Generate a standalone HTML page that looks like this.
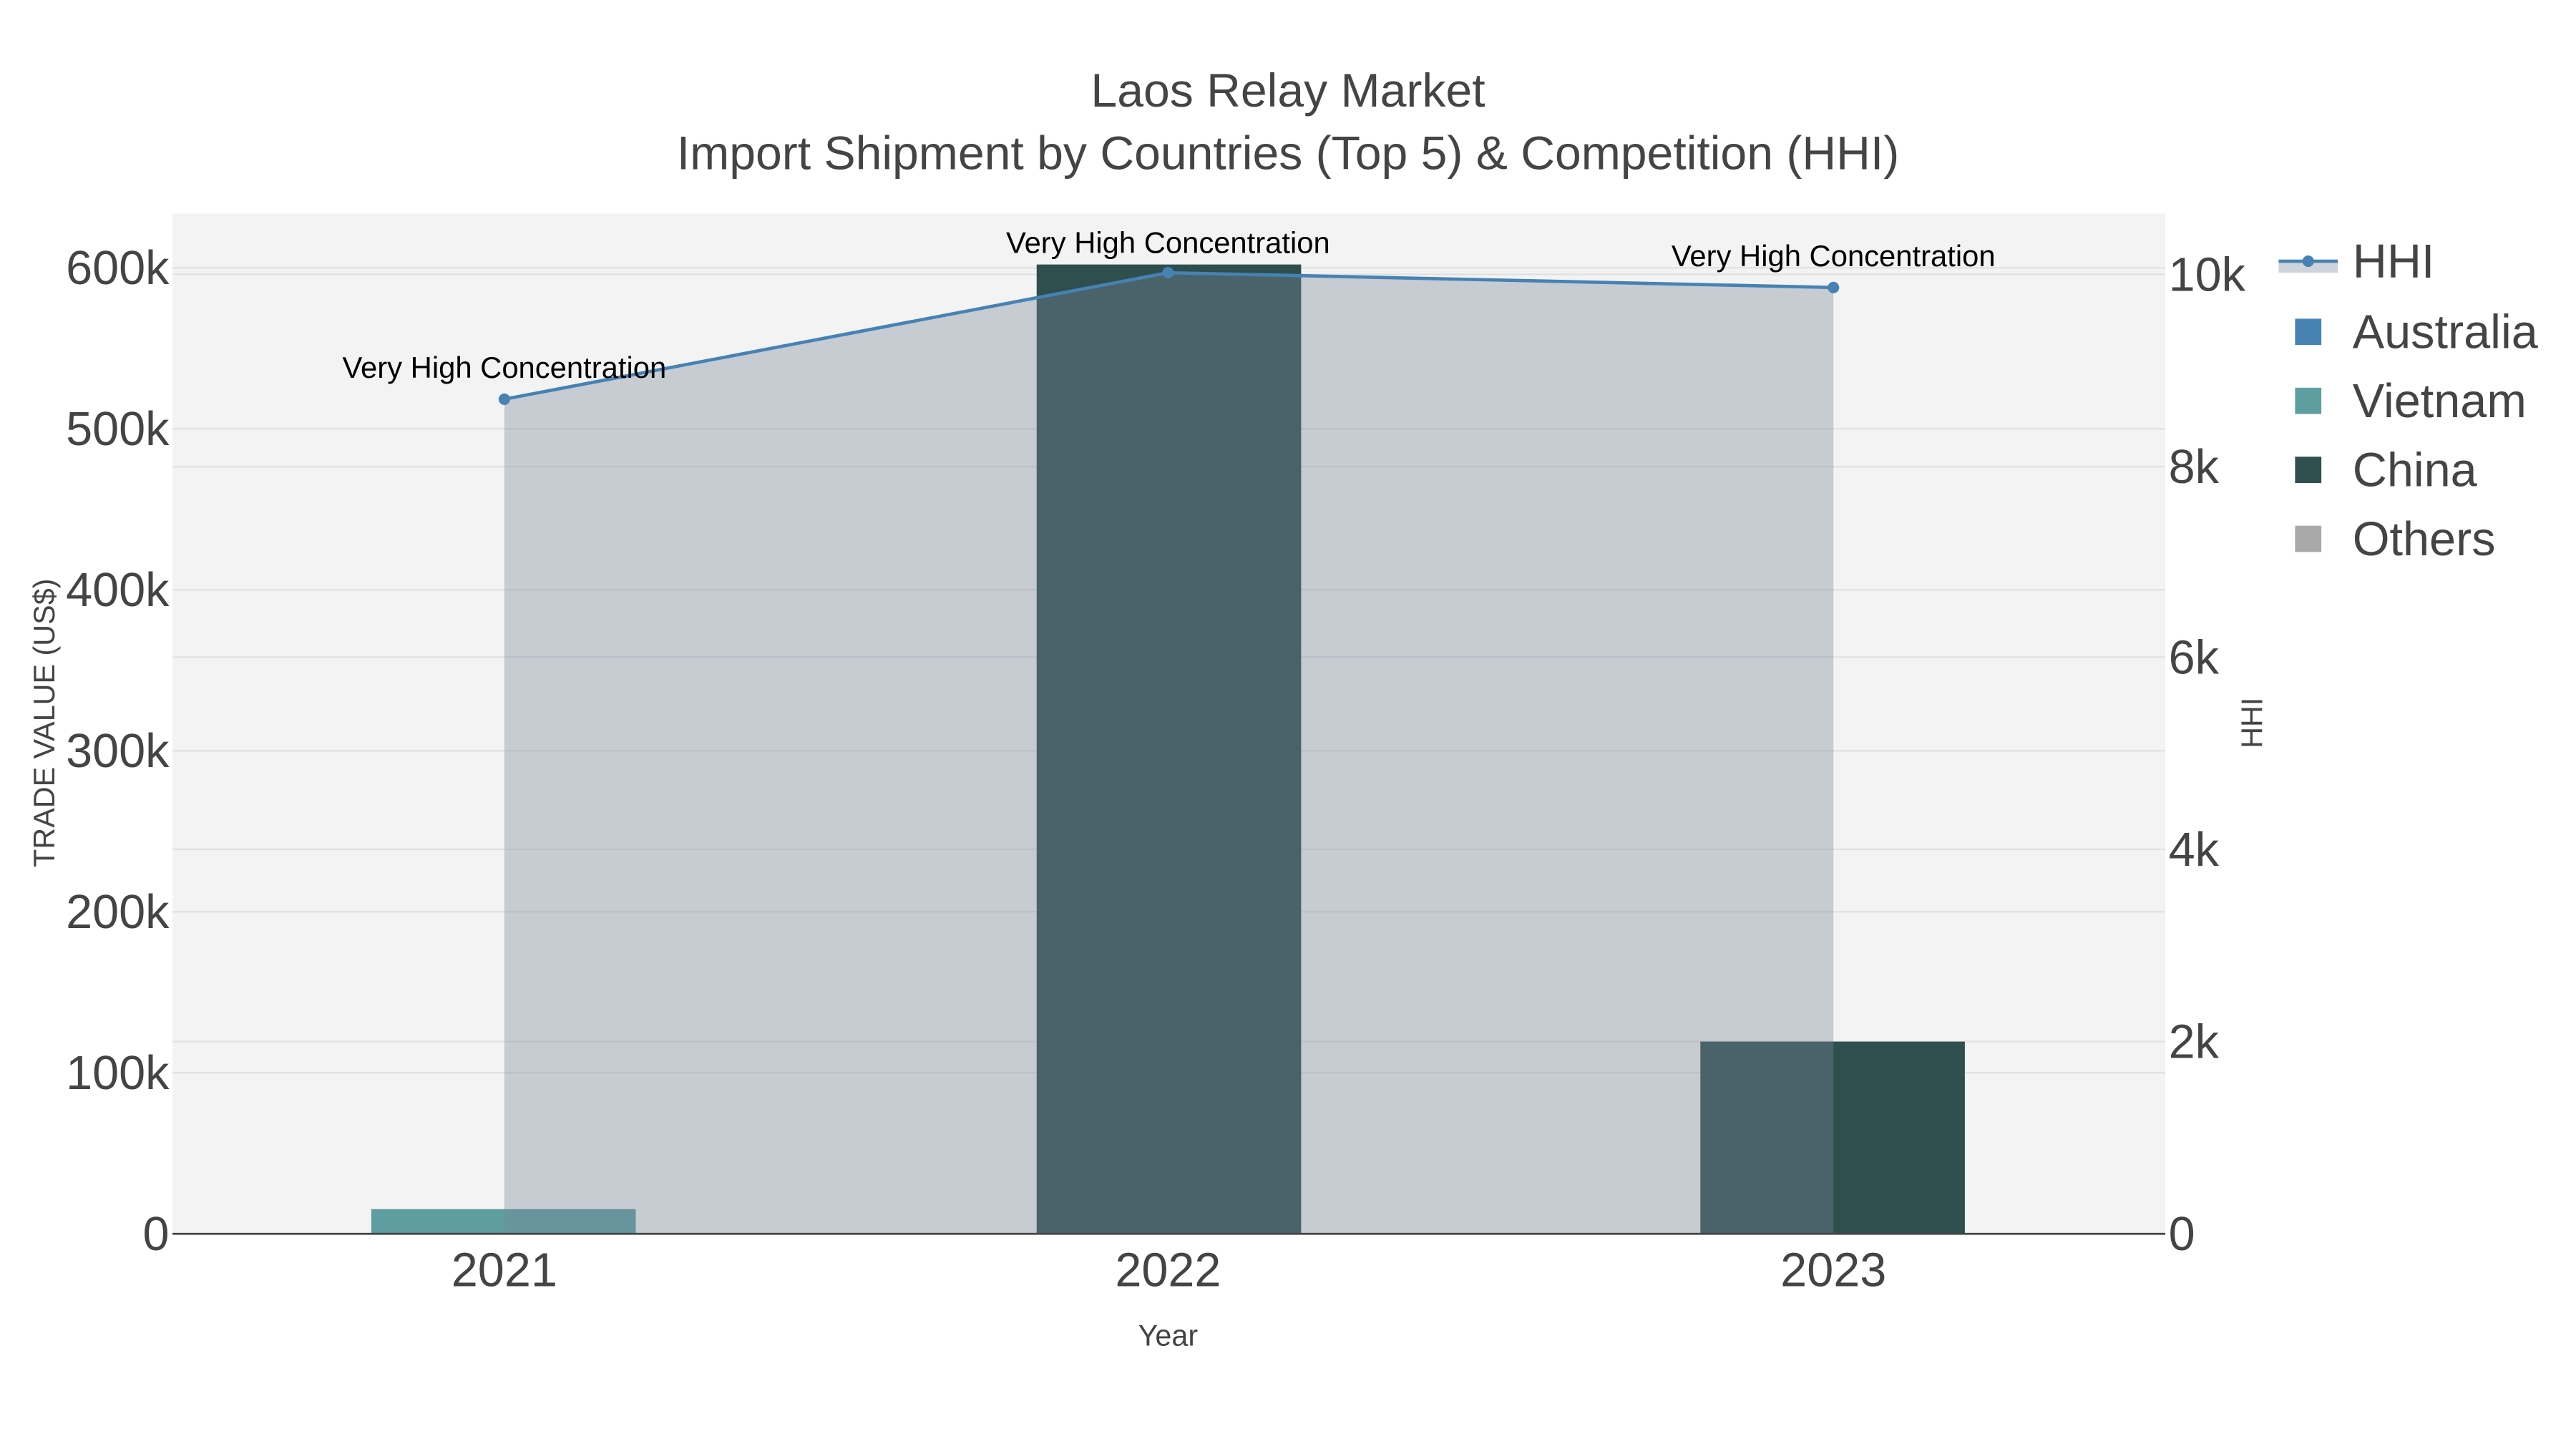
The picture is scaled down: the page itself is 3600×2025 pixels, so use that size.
<!DOCTYPE html>
<html><head><meta charset="utf-8"><style>html,body{margin:0;padding:0;background:#fff}svg{display:block}</style></head>
<body>
<svg width="3600" height="2025" viewBox="0 0 1568 882" xmlns="http://www.w3.org/2000/svg" font-family="Liberation Sans, sans-serif">
<rect width="1568" height="882" fill="#fff"/>
<rect x="105" y="130" width="1213" height="621" fill="#f3f3f3"/>
<g stroke="#e2e2e2" stroke-width="1">
<line x1="105" x2="1318" y1="163" y2="163"/><line x1="105" x2="1318" y1="261" y2="261"/><line x1="105" x2="1318" y1="359" y2="359"/><line x1="105" x2="1318" y1="457" y2="457"/><line x1="105" x2="1318" y1="555" y2="555"/><line x1="105" x2="1318" y1="653" y2="653"/>
<line x1="105" x2="1318" y1="167" y2="167"/><line x1="105" x2="1318" y1="284" y2="284"/><line x1="105" x2="1318" y1="400" y2="400"/><line x1="105" x2="1318" y1="517" y2="517"/><line x1="105" x2="1318" y1="634" y2="634"/>
</g>
<rect x="226" y="736" width="161" height="15" fill="#5f9ea0"/>
<rect x="631" y="161" width="161" height="590" fill="#2f4f4f"/>
<rect x="1035" y="634" width="161" height="117" fill="#2f4f4f"/>
<polygon points="307,243 711,166 1116,175 1116,751 307,751" fill="rgb(123,132,153)" fill-opacity="0.36"/>
<line x1="105" x2="1318" y1="751" y2="751" stroke="#444" stroke-width="1.2"/>
<polyline points="307,243 711,166 1116,175" fill="none" stroke="#4682b4" stroke-width="2"/>
<g fill="#4682b4"><circle cx="307" cy="243" r="3.5"/><circle cx="711" cy="166" r="3.5"/><circle cx="1116" cy="175" r="3.5"/></g>
<g font-size="18.2" fill="#000" text-anchor="middle">
<text x="307" y="230">Very High Concentration</text>
<text x="711" y="154">Very High Concentration</text>
<text x="1116" y="162">Very High Concentration</text>
</g>
<g fill="#444" text-anchor="middle" font-size="28.8">
<text x="784" y="65">Laos Relay Market</text>
<text x="784" y="103">Import Shipment by Countries (Top 5) &amp; Competition (HHI)</text>
</g>
<g fill="#444" font-size="29" text-anchor="end">
<text x="103" y="173">600k</text><text x="103" y="271">500k</text><text x="103" y="369">400k</text><text x="103" y="467">300k</text><text x="103" y="565">200k</text><text x="103" y="663">100k</text><text x="103" y="761">0</text>
</g>
<g fill="#444" font-size="29">
<text x="1320" y="177">10k</text><text x="1320" y="294">8k</text><text x="1320" y="410">6k</text><text x="1320" y="527">4k</text><text x="1320" y="644">2k</text><text x="1320" y="761">0</text>
</g>
<g fill="#444" font-size="29" text-anchor="middle">
<text x="307" y="783">2021</text><text x="711" y="783">2022</text><text x="1116" y="783">2023</text>
</g>
<text x="711" y="819" font-size="18" fill="#444" text-anchor="middle">Year</text>
<text transform="translate(33,440) rotate(-90)" font-size="18" fill="#444" text-anchor="middle">TRADE VALUE (US$)</text>
<text transform="translate(1377,440) rotate(-90)" font-size="18" fill="#444" text-anchor="middle">HHI</text>
<rect x="1387" y="159" width="36" height="7" fill="rgb(123,132,153)" fill-opacity="0.36"/>
<line x1="1387" x2="1423" y1="159" y2="159" stroke="#4682b4" stroke-width="2"/>
<circle cx="1405" cy="159" r="3.5" fill="#4682b4"/>
<rect x="1397" y="194" width="16" height="16" fill="#4682b4"/>
<rect x="1397" y="236" width="16" height="16" fill="#5f9ea0"/>
<rect x="1397" y="278" width="16" height="16" fill="#2f4f4f"/>
<rect x="1397" y="320" width="16" height="16" fill="#a9a9a9"/>
<g fill="#444" font-size="29">
<text x="1432" y="169">HHI</text><text x="1432" y="212">Australia</text><text x="1432" y="254">Vietnam</text><text x="1432" y="296">China</text><text x="1432" y="338">Others</text>
</g>
</svg>
</body></html>
